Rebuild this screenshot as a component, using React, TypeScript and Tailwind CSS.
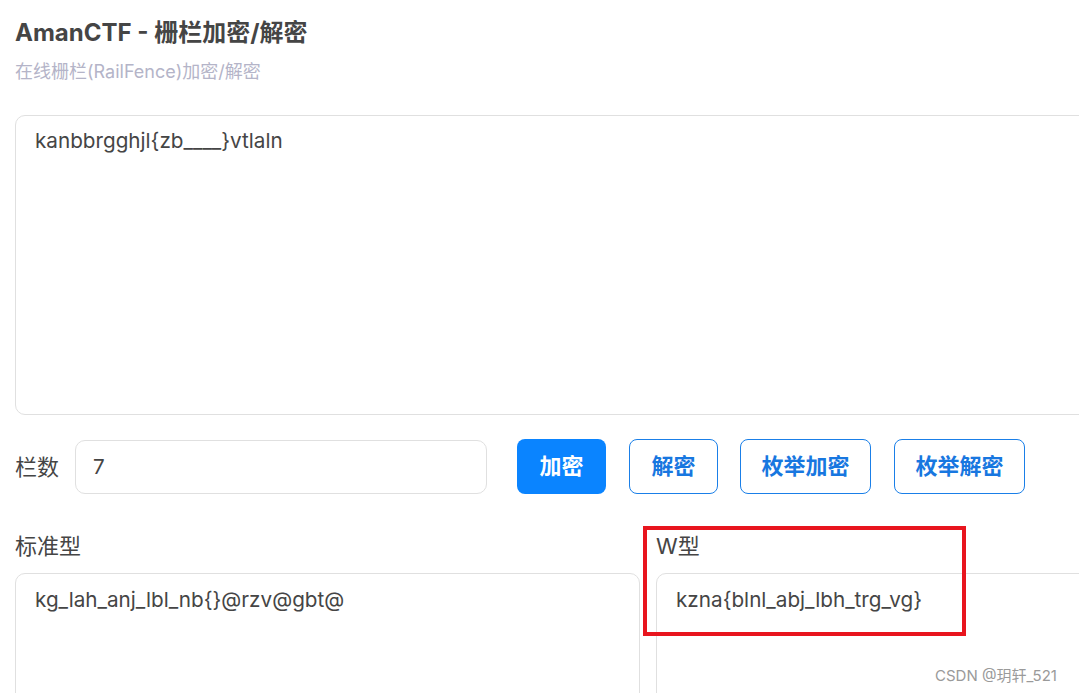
import React from "react";

const font = { fontFamily: 'Inter, "Noto Sans CJK SC", "Noto Sans", sans-serif' };

export default function App() {
  return (
    <div className="relative w-[1079px] h-[693px] overflow-hidden bg-white text-[#454545]" style={font}>
      <div className="w-[1266px] pl-[15px]">
        <h1 className="pt-[17px] text-[24px] leading-[32px] font-bold text-[#454545]">AmanCTF - 栅栏加密/解密</h1>
        <p className="mt-[10px] text-[18px] leading-[26px] text-[#b4b4c8]">在线栅栏(RailFence)加密/解密</p>
        <div className="mt-[30px] h-[300px] rounded-[10px] border border-[#e0e0e0] px-[19px] pt-[10px] text-[20.7px] leading-[30px] text-[#454545]">
          kanbbrgghjl{"{"}zb____{"}"}vtlaln
        </div>
        <div className="mt-[24px] flex items-center">
          <span className="text-[22px] leading-[30px] text-[#454545]">栏数</span>
          <div className="ml-[16px] flex h-[54px] w-[412px] items-center rounded-[10px] border border-[#e0e0e0] pl-[17px] text-[20.7px] text-[#454545]">7</div>
          <button className="ml-[30px] h-[55px] w-[89px] rounded-[8px] bg-[#0a84ff] text-[22px] font-bold text-white">加密</button>
          <button className="ml-[23px] h-[55px] w-[89px] rounded-[8px] border border-[#1a7fe8] text-[22px] font-bold text-[#1877e0]">解密</button>
          <button className="ml-[22px] h-[55px] w-[131px] rounded-[8px] border border-[#1a7fe8] text-[22px] font-bold text-[#1877e0]">枚举加密</button>
          <button className="ml-[23px] h-[55px] w-[131px] rounded-[8px] border border-[#1a7fe8] text-[22px] font-bold text-[#1877e0]">枚举解密</button>
        </div>
        <div className="mt-[37px] grid grid-cols-[625px_625px] gap-x-[16px]">
          <div>
            <div className="text-[22px] leading-[30px] text-[#454545]">标准型</div>
            <div className="mt-[12px] h-[200px] rounded-[10px] border border-[#e0e0e0] px-[19px] pt-[11px] text-[20.7px] leading-[30px] text-[#454545]">
              kg_lah_anj_lbl_nb{"{}"}@rzv@gbt@
            </div>
          </div>
          <div>
            <div className="text-[22px] leading-[30px] text-[#454545]">W型</div>
            <div className="mt-[12px] h-[200px] rounded-[10px] border border-[#e0e0e0] px-[19px] pt-[11px] text-[20.7px] leading-[30px] text-[#454545]">
              kzna{"{"}blnl_abj_lbh_trg_vg{"}"}
            </div>
          </div>
        </div>
      </div>
      <div className="absolute left-[643px] top-[526px] h-[110px] w-[323px] border-[4px] border-[#e8151e]" />
      <div className="absolute left-[935px] top-[665px] text-[15px] leading-[22px] text-[#9a9a9a]">CSDN @玥轩_521</div>
    </div>
  );
}
